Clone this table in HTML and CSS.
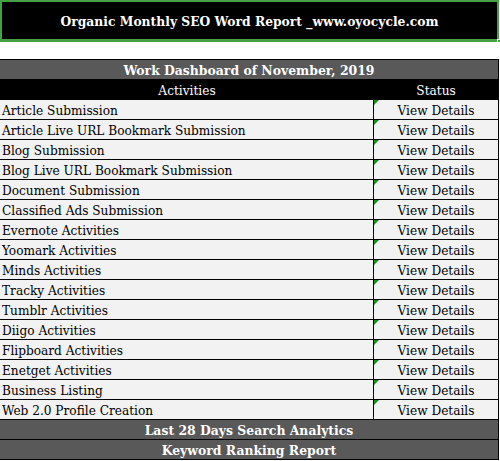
FILE: index.html
```html
<!DOCTYPE html>
<html>
<head>
<meta charset="utf-8">
<link rel="stylesheet" href="styles.css">
</head>
<body>
<div class="banner">
  <div class="banner-text">Organic Monthly SEO Word Report _www.oyocycle.com</div>
  <span class="handle"></span>
</div>
<div class="sheet">
  <div class="row band">Work Dashboard of November, 2019</div>
  <div class="row head"><div class="c1">Activities</div><div class="c2">Status</div></div>
  <div class="row data"><div class="c1">Article Submission</div><div class="c2"><span class="flag"></span>View Details</div></div>
  <div class="row data"><div class="c1">Article Live URL Bookmark Submission</div><div class="c2"><span class="flag"></span>View Details</div></div>
  <div class="row data"><div class="c1">Blog Submission</div><div class="c2"><span class="flag"></span>View Details</div></div>
  <div class="row data"><div class="c1">Blog Live URL Bookmark Submission</div><div class="c2"><span class="flag"></span>View Details</div></div>
  <div class="row data"><div class="c1">Document Submission</div><div class="c2"><span class="flag"></span>View Details</div></div>
  <div class="row data"><div class="c1">Classified Ads Submission</div><div class="c2"><span class="flag"></span>View Details</div></div>
  <div class="row data"><div class="c1">Evernote Activities</div><div class="c2"><span class="flag"></span>View Details</div></div>
  <div class="row data"><div class="c1">Yoomark Activities</div><div class="c2"><span class="flag"></span>View Details</div></div>
  <div class="row data"><div class="c1">Minds Activities</div><div class="c2"><span class="flag"></span>View Details</div></div>
  <div class="row data"><div class="c1">Tracky Activities</div><div class="c2"><span class="flag"></span>View Details</div></div>
  <div class="row data"><div class="c1">Tumblr Activities</div><div class="c2"><span class="flag"></span>View Details</div></div>
  <div class="row data"><div class="c1">Diigo Activities</div><div class="c2"><span class="flag"></span>View Details</div></div>
  <div class="row data"><div class="c1">Flipboard Activities</div><div class="c2"><span class="flag"></span>View Details</div></div>
  <div class="row data"><div class="c1">Enetget Activities</div><div class="c2"><span class="flag"></span>View Details</div></div>
  <div class="row data"><div class="c1">Business Listing</div><div class="c2"><span class="flag"></span>View Details</div></div>
  <div class="row data"><div class="c1">Web 2.0 Profile Creation</div><div class="c2"><span class="flag"></span>View Details</div></div>
  <div class="row band">Last 28 Days Search Analytics</div>
  <div class="row band">Keyword Ranking Report</div>
</div>
</body>
</html>
```

FILE: styles.css
```css
* { box-sizing: border-box; }
html, body { margin: 0; padding: 0; background: #fff; }
body {
  font-family: "DejaVu Serif Condensed", "DejaVu Serif", serif;
  font-size: 13.5px;
  color: #000;
  width: 500px;
}
.banner {
  position: relative;
  width: 499px;
  height: 42px;
  background: #000;
  border: 2px solid #46a046;
  border-bottom-width: 3px;
  display: flex;
  align-items: center;
  justify-content: center;
}
.banner-text {
  color: #fff;
  font-weight: bold;
  font-size: 13.7px;
}
.handle {
  position: absolute;
  right: -4px;
  bottom: -4px;
  width: 4px;
  height: 4px;
  background: #46a046;
  border: 1px solid #fff;
}
.sheet {
  margin-top: 17px;
  width: 499px;
  border-top: 1px solid #000;
}
.row {
  height: 20px;
  border-bottom: 1px solid #000;
  border-right: 1px solid #000;
  display: grid;
  grid-template-columns: 374px 1fr;
  line-height: 20px;
}
.band {
  display: block;
  background: #595959;
  color: #fff;
  font-weight: bold;
  text-align: center;
  font-size: 13.8px;
}
.head {
  background: #000;
  color: #fff;
  text-align: center;
}
.data {
  background: #f2f2f2;
}
.data .c1 {
  padding-left: 2px;
  border-right: 1px solid #000;
}
.data .c2 {
  position: relative;
  text-align: center;
}
.flag {
  position: absolute;
  left: 0;
  top: 0;
  width: 0;
  height: 0;
  border-top: 5px solid #1e8c1e;
  border-right: 5px solid transparent;
}
```
